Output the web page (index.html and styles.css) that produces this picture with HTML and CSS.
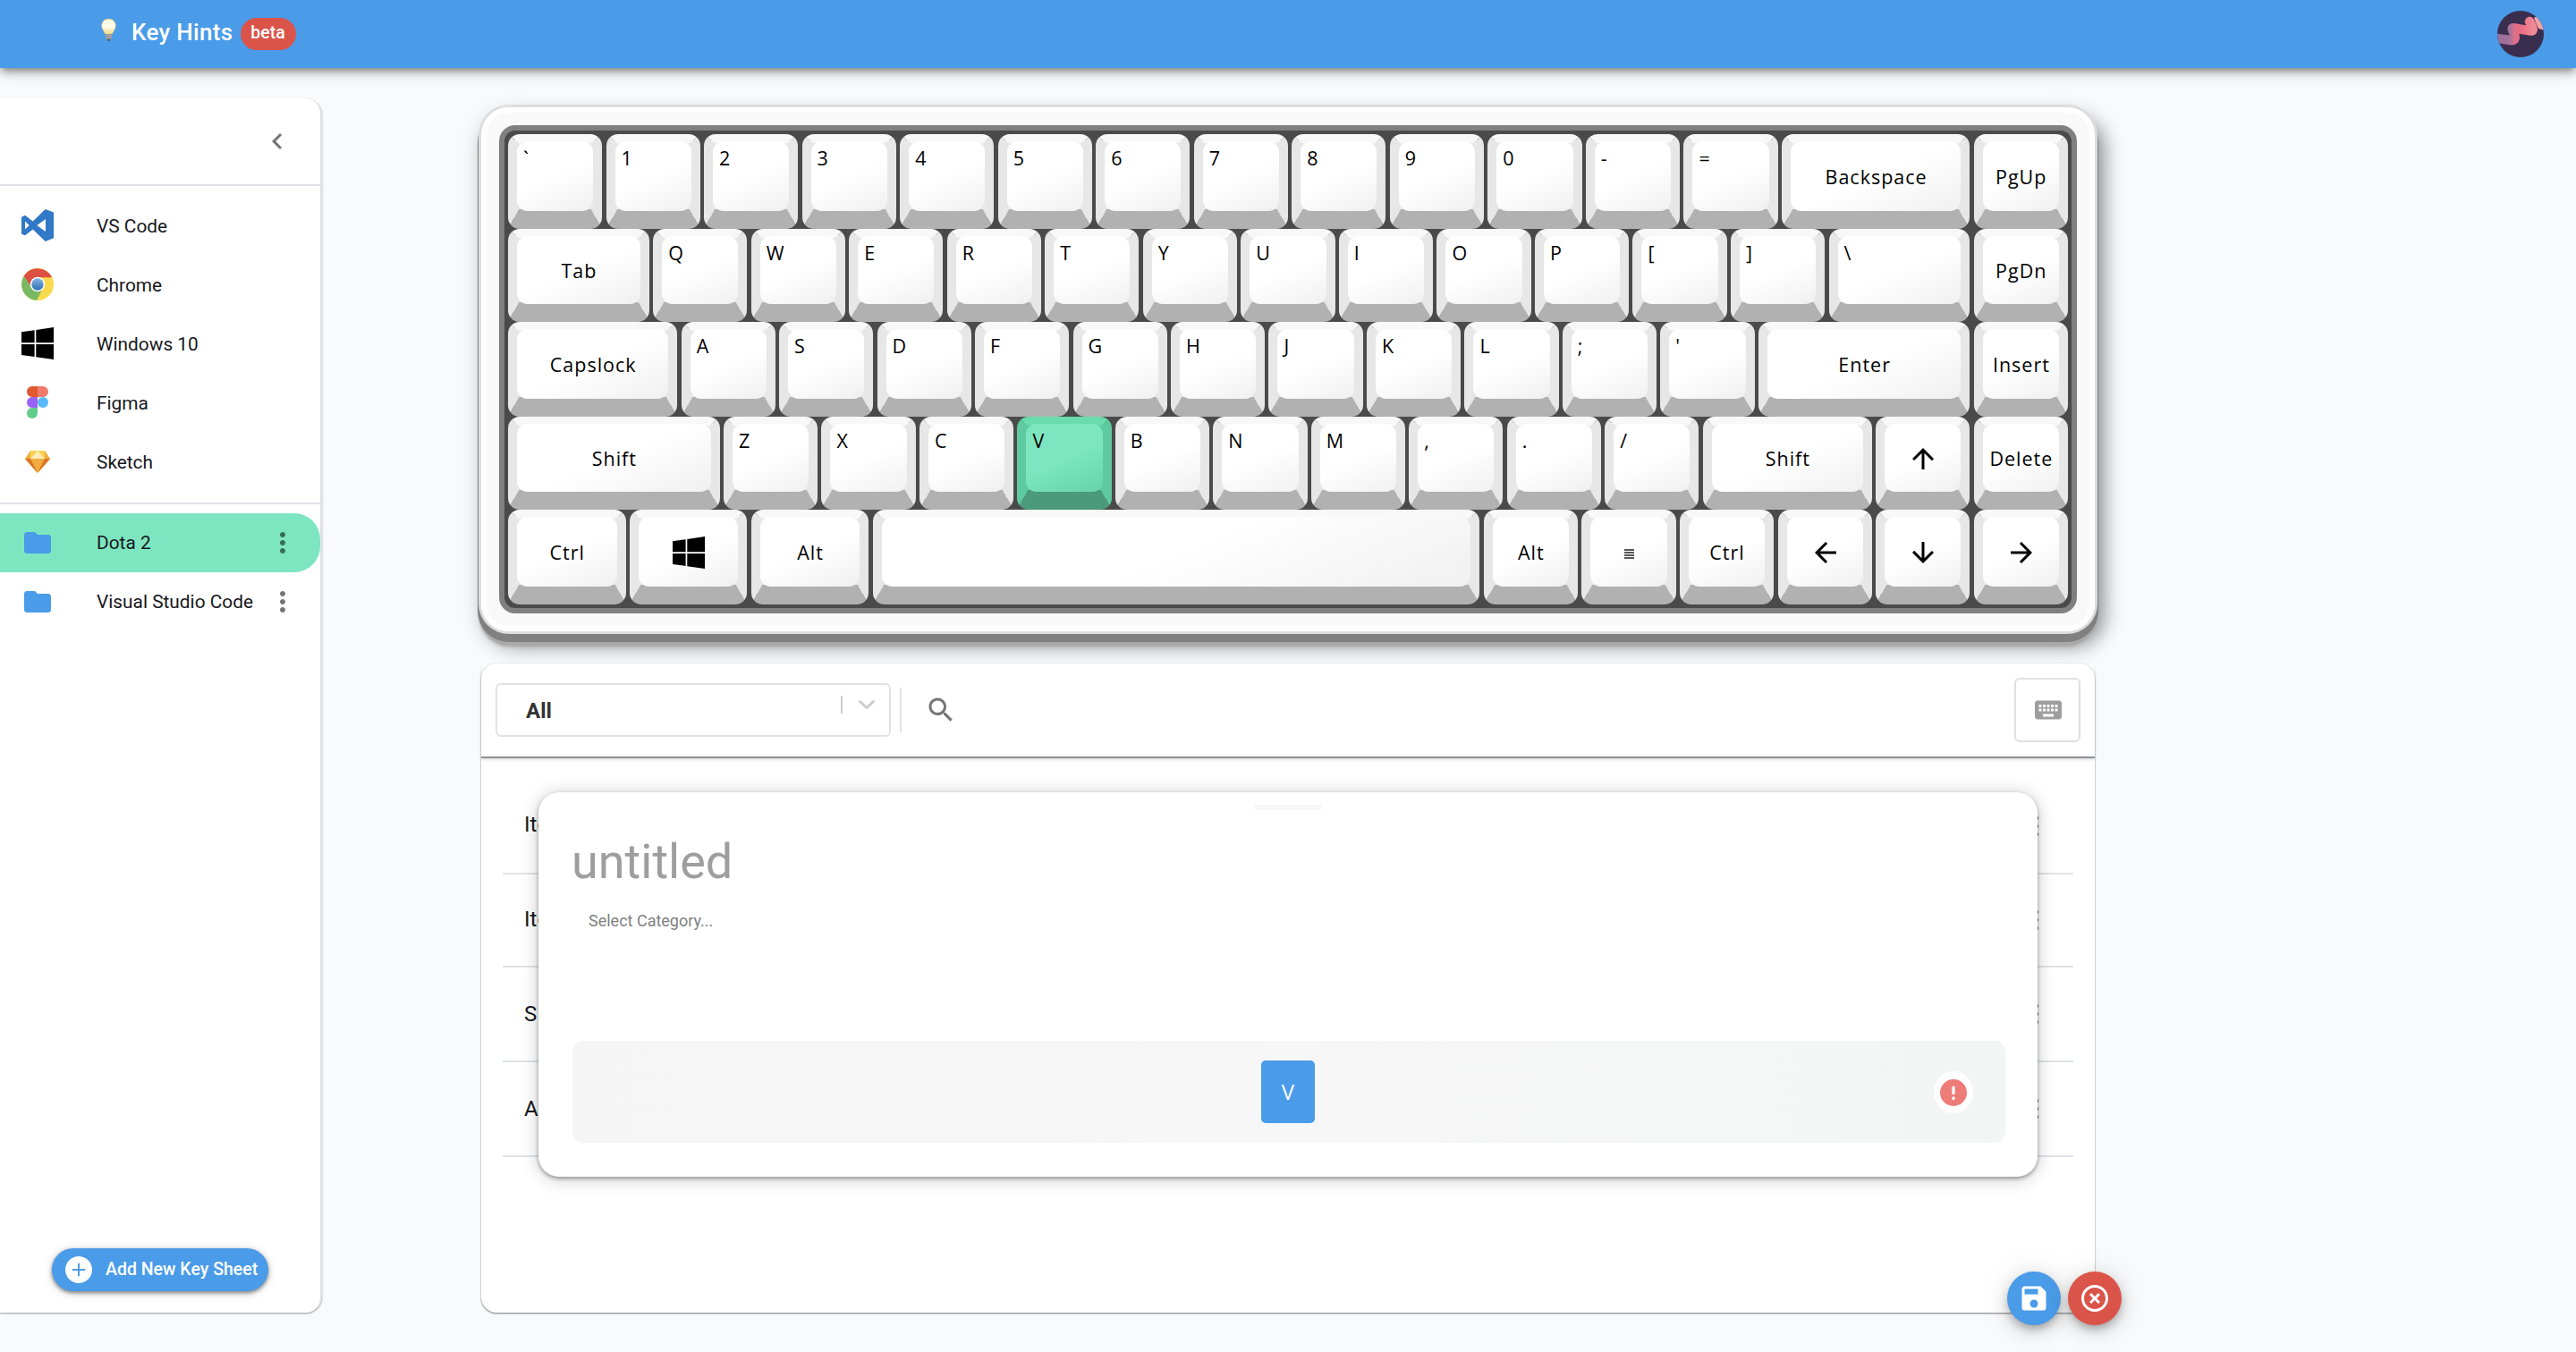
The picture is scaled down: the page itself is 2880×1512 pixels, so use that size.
FILE: index.html
```html
<!DOCTYPE html>
<html lang="en">
<head>
<meta charset="utf-8">
<title>Key Hints</title>
<link rel="stylesheet" href="styles.css">
</head>
<body>
<svg class="defs" width="0" height="0" aria-hidden="true">
  <defs>
    <linearGradient id="chromeBlue" x1="0" y1="0" x2="0" y2="1"><stop offset="0" stop-color="#86b3e0"/><stop offset="1" stop-color="#2e6fb7"/></linearGradient>
    <linearGradient id="bulbGlass" x1="0" y1="0" x2="0" y2="1"><stop offset="0" stop-color="#fdf6d8"/><stop offset=".5" stop-color="#fffdf0"/><stop offset="1" stop-color="#f0d98a"/></linearGradient>
    <linearGradient id="ribbon" x1="0" y1="0" x2="1" y2="0"><stop offset="0" stop-color="#8f6f9c"/><stop offset=".42" stop-color="#a87099"/><stop offset=".5" stop-color="#d8708c"/><stop offset=".7" stop-color="#ec6d82"/><stop offset="1" stop-color="#ee8a96"/></linearGradient>
    <clipPath id="round"><circle cx="26" cy="26" r="26"/></clipPath>
    <symbol id="more" viewBox="0 0 24 24"><path d="M12 8c1.1 0 2-.9 2-2s-.9-2-2-2-2 .9-2 2 .9 2 2 2zm0 2c-1.1 0-2 .9-2 2s.9 2 2 2 2-.9 2-2-.9-2-2-2zm0 6c-1.1 0-2 .9-2 2s.9 2 2 2 2-.9 2-2-.9-2-2-2z"/></symbol>
    <symbol id="folder" viewBox="0 0 24 24"><path d="M10 4H4c-1.1 0-1.99.9-1.99 2L2 18c0 1.1.9 2 2 2h16c1.1 0 2-.9 2-2V8c0-1.1-.9-2-2-2h-8l-2-2z"/></symbol>
    <symbol id="windows" viewBox="0 0 36 36"><path d="M0 5.2 14.6 3.200V17.300H0zM16.300 2.900 36 0V17.300H16.300zM0 18.900H14.600V32.900L0 30.900zM16.300 18.900H36V36L16.300 33.200z"/></symbol>
    <symbol id="arrow" viewBox="0 0 24 24"><path d="M20 11H7.830l5.590-5.590L12 4l-8 8 8 8 1.410-1.410L7.830 13H20v-2z"/></symbol>
  </defs>
</svg>

<header class="topbar">
  <div class="brand">
    <svg class="bulb" viewBox="0 0 18 27"><path d="M9 .5C4 .5.8 4 .8 8.400c0 3.600 2.200 5.400 3.300 8.100.5 1.300.7 2 1.400 2h7c.7 0 .9-.7 1.400-2 1.100-2.700 3.300-4.500 3.300-8.100C17.200 4 14 .5 9 .5z" fill="url(#bulbGlass)" stroke="#e8cf7c" stroke-width=".8"/><path d="M5.300 18.500h7.400v4.300L11 24.600H7l-1.700-1.800z" fill="#8d8f92"/><path d="M5.300 20.300h7.400M5.500 22.400h7" stroke="#c3c5c7" stroke-width=".7"/><path d="M7 24.600h4l-.8 1.900H7.800z" fill="#555"/></svg>
    <span class="title">Key Hints</span>
    <span class="beta">beta</span>
  </div>
  <svg class="avatar" viewBox="0 0 52 52"><g clip-path="url(#round)"><rect width="52" height="52" fill="#3a2e4f"/><path d="M41 8l3-2 10 5v11l-8-2z" fill="#f4a3a8"/><path d="M-3 30.500 15 33C21 34 20.500 29 18 24S16 18 22 20L38 22.500C42 23 38 15 36 12" fill="none" stroke="url(#ribbon)" stroke-width="10.500" stroke-linecap="round" stroke-linejoin="round"/></g></svg>
</header>

<main class="layout">
  <aside class="sidebar">
    <div class="side-head"><svg class="ico gray" viewBox="0 0 24 24"><path d="M15.410 7.410 14 6l-6 6 6 6 1.410-1.410L10.830 12z"/></svg></div>
    <nav class="side-list builtin">
      <div class="item"><svg class="ico" viewBox="0 0 36 36"><path fill="#3178c6" fill-rule="evenodd" d="M26.700 0 36 3.500v28.700L26.700 36 12.700 22.500 4 29.300 0 27.700V8.700l4-2 8.700 6.800zM27 11v14l-9.700-7zM4 13.500v9L8.700 18z"/></svg><span>VS Code</span></div>
      <div class="item"><svg class="ico" viewBox="0 0 36 36"><circle cx="18" cy="18" r="18" fill="#fada4d"/><path fill="#dd4f41" d="M2.400 9A18 18 0 0 1 33.700 9.500L34 10.200H18l-7.800 9.500z"/><path fill="#79b965" d="M2.900 8.500A18 18 0 0 0 17 36l6.500-13L11 21.500z"/><circle cx="18" cy="18" r="8.200" fill="#fff"/><circle cx="18" cy="18" r="6.700" fill="url(#chromeBlue)"/></svg><span>Chrome</span></div>
      <div class="item"><svg class="ico"><use href="#windows"/></svg><span>Windows 10</span></div>
      <div class="item"><svg class="ico" viewBox="0 0 36 36"><path fill="#e2582f" d="M18 0v12h-6a6 6 0 0 1 0-12z"/><path fill="#f07b6b" d="M18 0h6a6 6 0 0 1 0 12h-6z"/><path fill="#9b62f9" d="M18 12v12h-6a6 6 0 0 1 0-12z"/><circle cx="24" cy="18" r="6" fill="#57b8fa"/><path fill="#62cc8c" d="M12 24h6v6a6 6 0 1 1-6-6z"/></svg><span>Figma</span></div>
      <div class="item"><svg class="ico" viewBox="0 0 36 36"><path fill="#f0ac3e" d="M10 6h16l6 9-14 16L4 15z"/><path fill="#f8d24f" d="M10 6h16v9H10z"/><path fill="#dc7326" d="M4 15h6l8 16zM32 15h-6l-8 16z"/><path fill="#fdeab8" d="M18 6l8 9H10z"/></svg><span>Sketch</span></div>
    </nav>
    <nav class="side-list custom">
      <div class="item active"><svg class="ico blue"><use href="#folder"/></svg><span>Dota 2</span><svg class="ico more"><use href="#more"/></svg></div>
      <div class="item"><svg class="ico blue"><use href="#folder"/></svg><span>Visual Studio Code</span><svg class="ico more"><use href="#more"/></svg></div>
    </nav>
    <button class="add"><svg class="ico" viewBox="0 0 24 24"><path fill="#fff" d="M12 2C6.480 2 2 6.480 2 12s4.480 10 10 10 10-4.480 10-10S17.520 2 12 2z"/><path d="M12 7.700v8.600M7.700 12h8.600" stroke="#4a9be8" stroke-width="1.300" stroke-linecap="round"/></svg><span>Add New Key Sheet</span></button>
  </aside>

  <section class="content">
    <div class="keyboard">
      <div class="deck">
        <div class="row">
          <div class="key"><b>`</b></div><div class="key"><b>1</b></div><div class="key"><b>2</b></div><div class="key"><b>3</b></div><div class="key"><b>4</b></div><div class="key"><b>5</b></div><div class="key"><b>6</b></div><div class="key"><b>7</b></div><div class="key"><b>8</b></div><div class="key"><b>9</b></div><div class="key"><b>0</b></div><div class="key"><b>-</b></div><div class="key"><b>=</b></div><div class="key mid u200"><b>Backspace</b></div><div class="key mid"><b>PgUp</b></div>
        </div>
        <div class="row short">
          <div class="key mid u150"><b>Tab</b></div><div class="key"><b>Q</b></div><div class="key"><b>W</b></div><div class="key"><b>E</b></div><div class="key"><b>R</b></div><div class="key"><b>T</b></div><div class="key"><b>Y</b></div><div class="key"><b>U</b></div><div class="key"><b>I</b></div><div class="key"><b>O</b></div><div class="key"><b>P</b></div><div class="key"><b>[</b></div><div class="key"><b>]</b></div><div class="key u150"><b>\</b></div><div class="key mid"><b>PgDn</b></div>
        </div>
        <div class="row">
          <div class="key mid u180"><b>Capslock</b></div><div class="key"><b>A</b></div><div class="key"><b>S</b></div><div class="key"><b>D</b></div><div class="key"><b>F</b></div><div class="key"><b>G</b></div><div class="key"><b>H</b></div><div class="key"><b>J</b></div><div class="key"><b>K</b></div><div class="key"><b>L</b></div><div class="key"><b>;</b></div><div class="key"><b>'</b></div><div class="key mid u225"><b>Enter</b></div><div class="key mid"><b>Insert</b></div>
        </div>
        <div class="row short">
          <div class="key mid u225"><b>Shift</b></div><div class="key"><b>Z</b></div><div class="key"><b>X</b></div><div class="key"><b>C</b></div><div class="key on"><b>V</b></div><div class="key"><b>B</b></div><div class="key"><b>N</b></div><div class="key"><b>M</b></div><div class="key"><b>,</b></div><div class="key"><b>.</b></div><div class="key"><b>/</b></div><div class="key mid u180"><b>Shift</b></div><div class="key mid"><b><svg class="ico up"><use href="#arrow"/></svg></b></div><div class="key mid"><b>Delete</b></div>
        </div>
        <div class="row">
          <div class="key mid u125"><b>Ctrl</b></div><div class="key mid u125"><b><svg class="ico"><use href="#windows"/></svg></b></div><div class="key mid u125"><b>Alt</b></div><div class="key space"><b></b></div><div class="key mid"><b>Alt</b></div><div class="key mid"><b><svg class="lines" viewBox="0 0 11 11"><path d="M0 1h11M0 4h11M0 7h11M0 10h11" stroke="#222" stroke-width="1.700"/></svg></b></div><div class="key mid"><b>Ctrl</b></div><div class="key mid"><b><svg class="ico"><use href="#arrow"/></svg></b></div><div class="key mid"><b><svg class="ico down"><use href="#arrow"/></svg></b></div><div class="key mid"><b><svg class="ico right"><use href="#arrow"/></svg></b></div>
        </div>
      </div>
    </div>

    <div class="panel">
      <div class="toolbar">
        <div class="select"><span>All</span><i class="bar"></i><svg class="chev" viewBox="0 0 20 12"><path d="M2.500 2.500 10 9.500l7.500-7" fill="none" stroke="#ccc" stroke-width="3" stroke-linecap="round" stroke-linejoin="round"/></svg></div>
        <i class="split"></i>
        <svg class="ico search" viewBox="0 0 24 24"><path d="M15.500 14h-.79l-.28-.27C15.410 12.590 16 11.110 16 9.500 16 5.910 13.090 3 9.500 3S3 5.910 3 9.500 5.910 16 9.500 16c1.610 0 3.090-.59 4.230-1.570l.27.28v.79l5 4.990L20.490 19l-4.990-5zm-6 0C7.010 14 5 11.990 5 9.500S7.010 5 9.500 5 14 7.010 14 9.500 11.990 14 9.500 14z"/></svg>
        <button class="kbd"><svg class="ico" viewBox="0 0 24 24"><path d="M20 5H4c-1.100 0-1.990.9-1.990 2L2 17c0 1.100.9 2 2 2h16c1.100 0 2-.9 2-2V7c0-1.100-.9-2-2-2zm-9 3h2v2h-2V8zm0 3h2v2h-2v-2zM8 8h2v2H8V8zm0 3h2v2H8v-2zm-1 2H5v-2h2v2zm0-3H5V8h2v2zm9 7H8v-2h8v2zm0-4h-2v-2h2v2zm0-3h-2V8h2v2zm3 3h-2v-2h2v2zm0-3h-2V8h2v2z"/></svg></button>
      </div>
      <div class="rows">
        <div class="hint"><span>Ite</span><svg class="ico"><use href="#more"/></svg></div>
        <div class="hint short"><span>Ite</span><svg class="ico"><use href="#more"/></svg></div>
        <div class="hint"><span>S</span><svg class="ico"><use href="#more"/></svg></div>
        <div class="hint"><span>A</span><svg class="ico"><use href="#more"/></svg></div>
      </div>

      <div class="modal">
        <i class="grip"></i>
        <div class="name">untitled</div>
        <div class="category">Select Category...</div>
        <div class="combo">
          <span class="combo-key">V</span>
          <span class="alert"><svg viewBox="0 0 30 30"><circle cx="15" cy="15" r="15" fill="#ed7c78"/><path d="M15 9.200v6.300M15 20.900v.6" stroke="#fff" stroke-width="3.300" stroke-linecap="round"/></svg></span>
        </div>
      </div>

      <div class="fabs">
        <button class="fab save"><svg class="ico" viewBox="0 0 24 24"><path d="M15 9H5V5h10m-3 14a3 3 0 1 1 0-6 3 3 0 0 1 0 6m5-16H5c-1.110 0-2 .9-2 2v14a2 2 0 0 0 2 2h14a2 2 0 0 0 2-2V7l-4-4z"/></svg></button>
        <button class="fab cancel"><svg class="ico" viewBox="0 0 24 24"><path d="M14.590 8 12 10.590 9.410 8 8 9.410 10.590 12 8 14.590 9.410 16 12 13.410 14.590 16 16 14.590 13.410 12 16 9.410 14.590 8zM12 2C6.470 2 2 6.470 2 12s4.470 10 10 10 10-4.470 10-10S17.530 2 12 2zm0 18c-4.410 0-8-3.590-8-8s3.590-8 8-8 8 3.590 8 8-3.590 8-8 8z"/></svg></button>
      </div>
    </div>
  </section>
</main>
</body>
</html>
```
FILE: styles.css
```css
* { box-sizing: border-box; }

body {
  margin: 0;
  height: 1512px;
  display: flex;
  flex-direction: column;
  overflow: hidden;
  background: #f9fafc;
  font-family: Roboto, "Liberation Sans", sans-serif;
  color: #16181d;
}

.defs { position: absolute; }
button { font: inherit; border: 0; padding: 0; background: none; }
.ico { width: 36px; height: 36px; flex: none; display: block; }

/* Top bar */
.topbar {
  height: 76px;
  flex: none;
  display: flex;
  justify-content: space-between;
  padding: 12px 36px 0 113px;
  background: #4a9be8;
  box-shadow: 0 4px 8px -2px rgba(0, 0, 0, .4), 0 8px 10px rgba(0, 0, 0, .12), 0 2px 20px rgba(0, 0, 0, .1);
}
.brand { display: flex; align-items: flex-start; color: #fff; font-weight: 500; }
.bulb { width: 17px; height: 27px; margin: 8px 17px 0 0; }
.title { font-size: 26px; line-height: 30px; margin: 9px 8px 0 0; letter-spacing: .32px; }
.beta {
  width: 62px;
  height: 36px;
  margin-top: 8px;
  border-radius: 18px;
  background: #db5449;
  font-size: 19.5px;
  line-height: 34px;
  text-align: center;
}
.avatar { width: 52px; height: 52px; }

/* Layout */
.layout { display: flex; height: 1392px; margin-top: 34px; }

/* Sidebar */
.sidebar {
  width: 360px;
  height: 1358px;
  flex: none;
  display: flex;
  flex-direction: column;
  background: #fff;
  border-right: 2px solid #e0e2e7;
  border-radius: 0 18px 18px 0;
  box-shadow: 0 1px 2px rgba(0, 0, 0, .4);
}
.side-head {
  height: 98px;
  display: flex;
  align-items: center;
  justify-content: flex-end;
  padding-right: 30px;
  border-bottom: 2px solid #dfe3e9;
}
.gray { fill: #757575; }
.blue { fill: #4a9be8; }
.builtin { padding: 11px 0 13px; border-bottom: 2px solid #dfe3e9; }
.custom { padding-top: 10px; }
.item {
  height: 66px;
  display: flex;
  align-items: center;
  padding: 0 24px;
  font-size: 20.85px;
}
.item span { flex: 1; margin-left: 48px; white-space: nowrap; position: relative; top: 1px; }
.custom .item span { top: 0; }
.item.active { background: #7de6c0; border-radius: 0 29px 29px 0; }
.item .more { fill: rgba(0, 0, 0, .54); }
.add {
  width: 242px;
  height: 48px;
  margin: auto 0 24px 58px;
  padding-left: 12px;
  display: flex;
  align-items: center;
  gap: 12px;
  border-radius: 24px;
  background: #4a9be8;
  color: #fff;
  font-size: 19.5px;
  font-weight: 500;
  white-space: nowrap;
  box-shadow: 0 2px 4px rgba(0, 0, 0, .45), 0 2px 12px rgba(0, 0, 0, .15);
}
.add span { position: relative; top: -1px; }

/* Main column */
.content { width: 1804px; margin-left: 178px; }

.keyboard {
  width: 1804px;
  height: 586px;
  margin-top: 10px;
  padding: 20px;
  border-radius: 31px;
  background: #f9f9f9;
  box-shadow:
    inset 0 0 0 6px #fff,
    0 0 0 3px #ddd,
    0 8px 0 4px #808080,
    0 15px 3px 2px #a8a8a8,
    8px 14px 22px 2px rgba(0, 0, 0, .42),
    0 10px 36px rgba(0, 0, 0, .08);
}
.deck {
  height: 546px;
  padding: 4px;
  border: 6px solid #808080;
  border-radius: 18px;
  background: #4a4a4a;
}
.row { height: 106px; display: flex; justify-content: space-between; --u: 105.2px; }
.row.short { height: 104px; }

/* The cap overlaps the bevelled border by 2px on each side */
.key {
  width: var(--u);
  flex: none;
  display: flex;
  border: solid;
  border-width: 10px 12px 22px;
  border-color: #f8f8f8 #e7e7e7 #b1b1b1;
  border-radius: 13px;
  background: #e7e7e7;
}
.key b {
  flex: 1;
  margin: -2px;
  padding: 5px 0 0 7px;
  border-radius: 12px;
  background: linear-gradient(157deg, #fff 50%, #f0f0f0);
  color: #000;
  font: 400 21.500px/28px "Open Sans", "Noto Sans", sans-serif;
  letter-spacing: .4px;
  white-space: nowrap;
}
.key.mid b {
  display: flex;
  align-items: center;
  justify-content: center;
  padding: 1px 0 0 1px;
  letter-spacing: 1px;
}
.key.on { border-color: #69dbad #5fca9f #4a9a7b; background: #5fca9f; }
.key.on b { background: linear-gradient(157deg, #7de6c0 50%, #66d4aa); }
.u125 { width: calc(var(--u) * 1.25); }
.u150 { width: calc(var(--u) * 1.5); }
.u180 { width: calc(var(--u) * 1.8); }
.u200 { width: calc(var(--u) * 2); }
.u225 { width: calc(var(--u) * 2.25); }
.space { width: calc(var(--u) * 6.45); }
.up { transform: rotate(90deg); }
.down { transform: rotate(-90deg); }
.right { transform: rotate(180deg); }
.lines { width: 11px; height: 11px; margin-top: 4px; }

/* Panel */
.panel {
  position: relative;
  height: 726px;
  margin-top: 36px;
  border-radius: 17px;
  background: #fff;
  box-shadow: 0 1px 2px rgba(0, 0, 0, .5), 0 0 2px rgba(0, 0, 0, .1);
}
.toolbar {
  height: 106px;
  display: flex;
  align-items: center;
  padding: 0 16px;
  border-bottom: 2px solid #8f9098;
  box-shadow: 0 2px 4px -1px rgba(0, 0, 0, .2);
}
.select {
  width: 442px;
  height: 60px;
  display: flex;
  align-items: center;
  padding: 0 15px 0 32px;
  border: 2px solid #e2e2e2;
  border-radius: 6px;
  color: #333;
  font-size: 24px;
  font-weight: 700;
}
.select span { flex: 1; padding-top: 2px; }
.bar { width: 2px; height: 20px; margin: -12px 17px 0 0; background: #ccc; }
.chev { width: 20px; height: 12px; margin-top: -12px; }
.split { width: 2px; height: 50px; margin-left: 10px; background: #dfe3e8; }
.search { margin-left: 26px; fill: #757575; }
.kbd {
  width: 74px;
  height: 72px;
  margin-left: auto;
  display: grid;
  place-items: center;
  padding-left: 1px;
  border: 2px solid #e0e0e0;
  border-radius: 6px;
  fill: #9e9e9e;
}
.rows { padding: 24px 24px 0; }
.hint {
  height: 106px;
  display: flex;
  align-items: center;
  justify-content: space-between;
  padding: 0 24px 0 24px;
  border-bottom: 2px solid #dfe3e8;
  font-size: 24px;
  fill: #616161;
}
.hint.short { height: 104px; }
.hint span { position: relative; top: -2px; }
.hint.short span { top: -1px; }
.hint.short ~ .hint span { top: 0; }

/* Editor card over the list */
.modal {
  position: absolute;
  left: 64px;
  top: 144px;
  width: 1676px;
  height: 430px;
  padding: 14px 36px 38px 38px;
  display: flex;
  flex-direction: column;
  border-radius: 23px;
  background: #fff;
  box-shadow: 0 2px 4px rgba(0, 0, 0, .35), 0 2px 20px rgba(0, 0, 0, .22);
}
.grip { width: 76px; height: 6px; margin-right: 2px; align-self: center; border-radius: 3px; background: #f7f7f7; }
.name { margin: 26px 0 0 -1px; font-size: 54px; line-height: 64px; color: #9e9e9e; }
.category { margin: 22px 0 0 18px; font-size: 18px; line-height: 24px; color: #808080; }
.combo {
  position: relative;
  height: 114px;
  margin-top: auto;
  padding-right: 2px;
  display: grid;
  place-items: center;
  border-radius: 12px;
  background: linear-gradient(90deg, #f5f5f5, #f7f7f7 50%, #f3f5f4);
}
.combo-key {
  width: 60px;
  height: 70px;
  border-radius: 5px;
  background: #4a9be8;
  color: #fff;
  font: 400 24px/70px "Open Sans", "Noto Sans", sans-serif;
  text-align: center;
}
.alert {
  position: absolute;
  right: 36px;
  top: 34px;
  width: 44px;
  height: 47px;
  border-radius: 50%;
  background: #fff;
  display: grid;
  place-items: center;
}
.alert svg { width: 30px; height: 30px; margin-top: 1px; }

/* Floating actions at the panel corner */
.fabs { position: absolute; right: -30px; bottom: -14px; display: flex; gap: 8px; }
.fab {
  width: 60px;
  height: 60px;
  border-radius: 50%;
  display: grid;
  place-items: center;
  fill: #fff;
  box-shadow: 0 6px 10px -2px rgba(0, 0, 0, .25), 0 6px 20px rgba(0, 0, 0, .14), 0 2px 36px rgba(0, 0, 0, .1);
}
.save { background: #4a9be8; }
.cancel { background: #db5449; }
```
